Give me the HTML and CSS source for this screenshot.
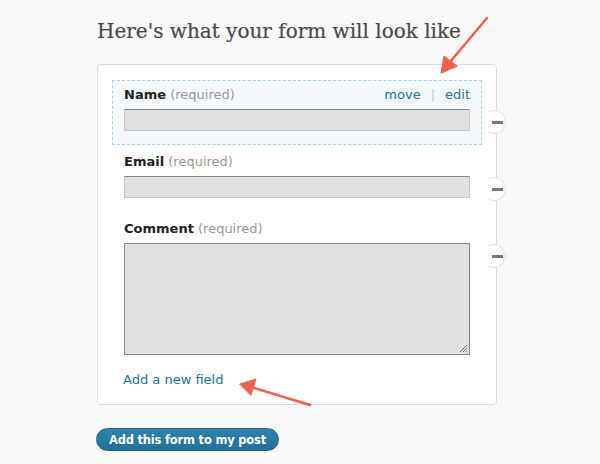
FILE: index.html
```html
<!DOCTYPE html>
<html lang="en">
<head>
  <meta charset="UTF-8" />
  <title>Form preview</title>
  <link rel="stylesheet" href="styles.css">
</head>
<body>

  <div class="page">
    <h1>Here's what your form will look like</h1>

    <div class="card">
      <div class="field active">
        <div class="label-row">
          <label><b>Name</b> <span class="req">(required)</span></label>
          <span class="actions"><a href="#">move</a><span class="sep">|</span><a href="#">edit</a></span>
        </div>
        <div class="input-wrap">
          <div class="input"></div>
          <span class="remove"><i></i></span>
        </div>
      </div>

      <div class="field">
        <div class="label-row">
          <label><b>Email</b> <span class="req">(required)</span></label>
        </div>
        <div class="input-wrap">
          <div class="input"></div>
          <span class="remove"><i></i></span>
        </div>
      </div>

      <div class="field">
        <div class="label-row">
          <label><b>Comment</b> <span class="req">(required)</span></label>
        </div>
        <div class="input-wrap">
          <div class="input textarea">
            <svg class="grip" width="9" height="9" viewBox="0 0 9 9">
              <path d="M1 8 L8 1 M4 8 L8 4 M7 8 L8 7" stroke="#777" stroke-width="1" fill="none"/>
            </svg>
          </div>
          <span class="remove"><i></i></span>
        </div>
      </div>

      <a class="add-field" href="#">Add a new field</a>
    </div>

    <button class="submit">Add this form to my post</button>
  </div>

  <!-- annotation arrows -->
  <svg class="arrows" width="600" height="464" viewBox="0 0 600 464">
    <g stroke="#f0604c" stroke-width="2.5" stroke-linecap="round" fill="#f0604c">
      <line x1="487" y1="18" x2="450" y2="62"/>
      <polygon points="441,73 444,56 457,66" stroke-width="1" stroke-linejoin="round"/>
      <line x1="310" y1="405" x2="254" y2="388"/>
      <polygon points="240,384 256,379 251,395" stroke-width="1" stroke-linejoin="round"/>
    </g>
  </svg>

</body>
</html>
```

FILE: styles.css
```css
body {
  margin: 0;
  background: #f9f9f9;
  font-family: "DejaVu Sans", Verdana, sans-serif;
  font-size: 13px;
}
.page {
  padding: 16px 0 0 97px;
}
h1 {
  margin: 0 0 18px;
  font-family: "DejaVu Serif", Georgia, serif;
  font-weight: normal;
  font-size: 20px;
  line-height: 30px;
  color: #4a4a4a;
  -webkit-text-stroke: 0.2px #4a4a4a;
}
.card {
  width: 370px;
  padding: 15px 14px 15px;
  background: #fff;
  border: 1px solid #ddd;
  border-radius: 4px;
}
.field {
  padding: 5px 11px 13px;
  margin-bottom: 2px;
  border: 1px dashed transparent;
}
.field.active {
  background: #f5f9fc;
  border-color: #a9d3e6;
}
.label-row {
  display: flex;
  justify-content: space-between;
  line-height: 18px;
  margin-bottom: 5px;
}
label b {
  color: #222;
}
.req {
  color: #999;
}
.actions a {
  color: #21759b;
  text-decoration: none;
}
.sep {
  color: #ccc;
  margin: 0 10px;
}
.input-wrap {
  position: relative;
}
.input {
  height: 20px;
  background: #e0e0e0;
  border: 1px solid #c8c8c8;
  border-top-color: #888;
}
.textarea {
  position: relative;
  height: 110px;
  border-color: #888;
}
.grip {
  position: absolute;
  right: 1px;
  bottom: 1px;
}
.remove {
  position: absolute;
  top: 1px;
  right: -36px;
  width: 22px;
  height: 22px;
  border: 1px solid #e2e2e2;
  border-radius: 50%;
  background: #fff;
  display: flex;
  align-items: center;
  justify-content: center;
  clip-path: inset(-2px -2px -2px 6px);
}
.remove i {
  display: block;
  width: 11px;
  height: 3px;
  background: #777;
  margin-left: 6px;
}
.add-field {
  display: block;
  margin: 2px 0 0 11px;
  line-height: 18px;
  color: #21759b;
  text-decoration: none;
}
.submit {
  margin: 23px 0 0 -1px;
  height: 23px;
  padding: 0 12px;
  border: 1px solid #1e5f81;
  border-radius: 12px;
  background: linear-gradient(#2d83ad, #21709a);
  color: #fff;
  font-family: "DejaVu Sans", Verdana, sans-serif;
  font-weight: bold;
  font-size: 11.5px;
  letter-spacing: -0.2px;
}
.arrows {
  position: absolute;
  top: 0;
  left: 0;
  pointer-events: none;
}
```
